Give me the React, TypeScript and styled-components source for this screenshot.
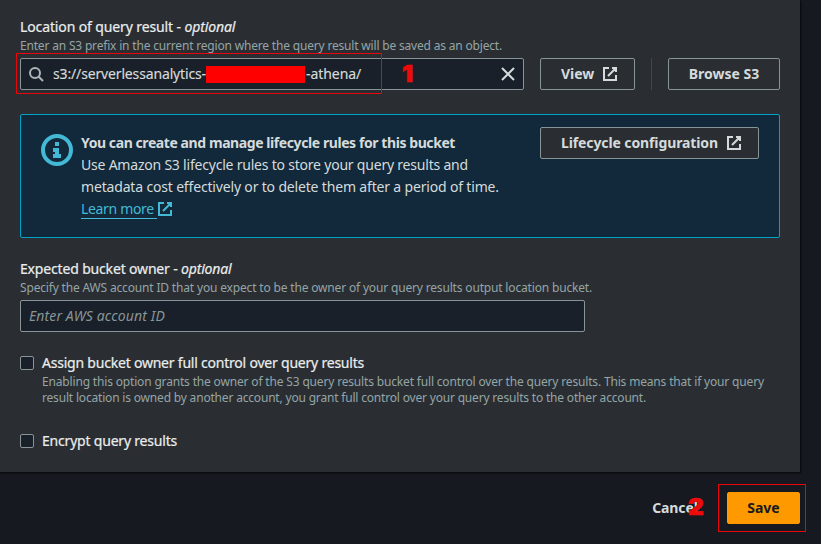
import React from 'react';
import styled, { createGlobalStyle } from 'styled-components';

const GlobalStyle = createGlobalStyle`
  * { box-sizing: border-box; }
  body {
    margin: 0;
    background: #16191f;
    color: #d5dbdb;
    font: 400 14px/22px 'Noto Sans', 'Open Sans', sans-serif;
    overflow: hidden;
  }
`;

const Page = styled.main`
  position: relative;
  width: 821px;
  height: 544px;
  overflow: hidden;
`;

const Panel = styled.section`
  width: 800px;
  height: 472px;
  padding: 16px 20px 0;
  background: #2a2e33;
  box-shadow: 1px 1px 1px #0a0c10, 0 1px 2px #0a0c10;
`;

const Spaced = styled.span<{ $track: number }>`
  letter-spacing: ${(p) => p.$track}px;
  white-space: pre;
`;

const Field = styled.div`
  display: flex;
  flex-direction: column;
`;

const Label = styled.label`
  color: #eaeded;
  height: 22px;
  white-space: pre;
  -webkit-text-stroke: 0.2px #eaeded;
`;

const Hint = styled.div`
  color: #95a5a6;
  font-size: 12px;
  line-height: 16px;
  display: flex;
  flex-direction: column;
`;

const ControlRow = styled.div`
  display: flex;
  margin-top: 4px;
`;

const InputBox = styled.div<{ $width: number }>`
  display: flex;
  align-items: center;
  width: ${(p) => p.$width}px;
  height: 32px;
  padding: 0 7px;
  border: 1px solid #879596;
  border-radius: 2px;
  background: #1a2029;
`;

const InputText = styled.div`
  display: flex;
  align-items: center;
  flex: 1;
  margin-left: 9px;
  -webkit-text-stroke: 0.15px #d5dbdb;
`;

const Redaction = styled.span`
  width: 99px;
  height: 17px;
  margin-right: 1px;
  background: #ff0000;
`;

const Placeholder = styled.span`
  margin-left: 1px;
  color: #879596;
  font-style: italic;
  letter-spacing: 0.12px;
`;

const Button = styled.button<{ $width: number; $kind?: 'primary' | 'link' }>`
  display: flex;
  align-items: center;
  justify-content: center;
  gap: 8px;
  width: ${(p) => p.$width}px;
  height: 32px;
  padding: 0;
  border: 1px solid
    ${(p) => (p.$kind === 'primary' ? '#ff9900' : p.$kind === 'link' ? 'transparent' : '#879596')};
  border-radius: 2px;
  background: ${(p) =>
    p.$kind === 'primary' ? '#ff9900' : p.$kind === 'link' ? 'transparent' : '#2a2e33'};
  color: ${(p) => (p.$kind === 'primary' ? '#16191f' : '#d5dbdb')};
  font: 700 14px/22px 'Noto Sans', 'Open Sans', sans-serif;
`;

const IconButton = styled(Button)`
  justify-content: flex-start;
  padding-left: 20px;
`;

const ViewSlot = styled.div`
  margin-left: 16px;
`;

const Divider = styled.div`
  width: 1px;
  margin: 0 16px;
  background: #414750;
`;

const Alert = styled.section`
  display: flex;
  align-items: flex-start;
  height: 124px;
  margin: 24px 0 20px;
  padding: 12px 20px 0;
  border: 1px solid #00a1c9;
  border-radius: 2px;
  background: #12293b;
`;

const AlertBody = styled.div`
  display: flex;
  flex-direction: column;
  flex: 1;
  margin: 5px 0 0 8px;
`;

const InfoSlot = styled.div`
  display: flex;
  margin-top: 7px;
`;

const Title = styled.strong`
  font-weight: 700;
`;

const Link = styled.a`
  display: flex;
  align-items: center;
  height: 22px;
  color: #44b9d6;
`;

const LinkText = styled.span`
  width: 76px;
  height: 21px;
  line-height: 22px;
  margin: 1px 0 3px;
  border-bottom: 1px solid #44b9d6;
  letter-spacing: -0.33px;
`;

const CheckRow = styled.div<{ $top: number }>`
  display: flex;
  gap: 8px;
  margin-top: ${(p) => p.$top}px;
`;

const Checkbox = styled.span`
  width: 14px;
  height: 14px;
  margin-top: 4px;
  border: 1px solid #879596;
  border-radius: 2px;
  background: #1a2029;
`;

const Footer = styled.footer`
  display: flex;
  justify-content: flex-end;
  gap: 8px;
  width: 800px;
  margin-top: 20px;
`;

const Marker = styled.div<{ $x: number; $y: number; $w: number; $h: number }>`
  position: absolute;
  left: ${(p) => p.$x}px;
  top: ${(p) => p.$y}px;
  width: ${(p) => p.$w}px;
  height: ${(p) => p.$h}px;
  border: 1px solid #e8060c;
`;

const MarkerNumber = styled.span<{ $x: number; $y: number }>`
  position: absolute;
  left: ${(p) => p.$x}px;
  top: ${(p) => p.$y}px;
  color: #ee0a0a;
  font: 900 23px/24px Inter, sans-serif;
  -webkit-text-stroke: 0.6px #ee0a0a;
  transform: scaleX(1.06);
  transform-origin: left;
`;

const Icon = styled.svg<{ $muted?: boolean }>`
  flex: none;
  fill: none;
  stroke: ${(p) => (p.$muted ? '#aab7b8' : 'currentColor')};
  stroke-width: 2;
`;

const ExternalIcon = () => (
  <Icon width="16" height="16" viewBox="0 0 16 16">
    <path d="M10 2h4v4M6 10l8-8M14 9v5H2V2h5" />
  </Icon>
);

const SearchIcon = () => (
  <Icon $muted width="16" height="16" viewBox="0 0 16 16">
    <circle cx="7" cy="7" r="5" />
    <path d="M10.5 10.5L15 15" />
  </Icon>
);

const CloseIcon = () => (
  <Icon width="16" height="16" viewBox="0 0 16 16">
    <path d="M2 2l12 12M14 2L2 14" />
  </Icon>
);

const InfoSvg = styled.svg`
  color: #44b9d6;
`;

const InfoIcon = () => (
  <InfoSvg width="32" height="32" viewBox="0 0 32 32">
    <circle cx="16" cy="16" r="14" fill="none" stroke="currentColor" strokeWidth="4" />
    <path d="M14 8h4v4h-4zM12 14h6v6h2v4h-8v-4h2v-2h-2z" fill="currentColor" />
  </InfoSvg>
);

export default function App() {
  return (
    <Page>
      <GlobalStyle />
      <Panel>
        <Field>
          <Label>
            <Spaced $track={-0.12}>Location of query result - <em>optional</em></Spaced>
          </Label>
          <Hint>
            <Spaced $track={-0.182}>
              Enter an S3 prefix in the current region where the query result will be saved as an object.
            </Spaced>
          </Hint>
          <ControlRow>
            <InputBox $width={504}>
              <SearchIcon />
              <InputText>
                <Spaced $track={-0.15}>s3://serverlessanalytics-</Spaced>
                <Redaction />
                <Spaced $track={-0.05}>-athena/</Spaced>
              </InputText>
              <CloseIcon />
            </InputBox>
            <ViewSlot>
              <IconButton $width={95}>View<ExternalIcon /></IconButton>
            </ViewSlot>
            <Divider />
            <Button $width={112}>Browse S3</Button>
          </ControlRow>
        </Field>

        <Alert>
          <InfoSlot><InfoIcon /></InfoSlot>
          <AlertBody>
            <Title><Spaced $track={-0.42}>You can create and manage lifecycle rules for this bucket</Spaced></Title>
            <Spaced $track={-0.21}>Use Amazon S3 lifecycle rules to store your query results and</Spaced>
            <Spaced $track={-0.168}>metadata cost effectively or to delete them after a period of time.</Spaced>
            <Link>
              <LinkText>Learn more</LinkText>
              <ExternalIcon />
            </Link>
          </AlertBody>
          <IconButton $width={219}>
            <Spaced $track={-0.11}>Lifecycle configuration</Spaced>
            <ExternalIcon />
          </IconButton>
        </Alert>

        <Field>
          <Label>
            <Spaced $track={-0.165}>Expected bucket owner - <em>optional</em></Spaced>
          </Label>
          <Hint>
            <Spaced $track={-0.168}>
              Specify the AWS account ID that you expect to be the owner of your query results output location bucket.
            </Spaced>
          </Hint>
          <ControlRow>
            <InputBox $width={565}>
              <Placeholder>Enter AWS account ID</Placeholder>
            </InputBox>
          </ControlRow>
        </Field>

        <CheckRow $top={20}>
          <Checkbox />
          <Field>
            <Label><Spaced $track={-0.215}>Assign bucket owner full control over query results</Spaced></Label>
            <Hint>
              <Spaced $track={-0.167}>
                Enabling this option grants the owner of the S3 query results bucket full control over the query results. This means that if your query
              </Spaced>
              <Spaced $track={-0.184}>
                result location is owned by another account, you grant full control over your query results to the other account.
              </Spaced>
            </Hint>
          </Field>
        </CheckRow>
        <CheckRow $top={24}>
          <Checkbox />
          <Label><Spaced $track={-0.2}>Encrypt query results</Spaced></Label>
        </CheckRow>
      </Panel>

      <Footer>
        <Button $width={88} $kind="link"><Spaced $track={-0.1}>Cancel</Spaced></Button>
        <Button $width={73} $kind="primary">Save</Button>
      </Footer>

      <Marker $x={16} $y={53} $w={366} $h={41} />
      <MarkerNumber $x={402} $y={62}>1</MarkerNumber>
      <Marker $x={718} $y={484} $w={88} $h={48} />
      <MarkerNumber $x={688} $y={495}>2</MarkerNumber>
    </Page>
  );
}
